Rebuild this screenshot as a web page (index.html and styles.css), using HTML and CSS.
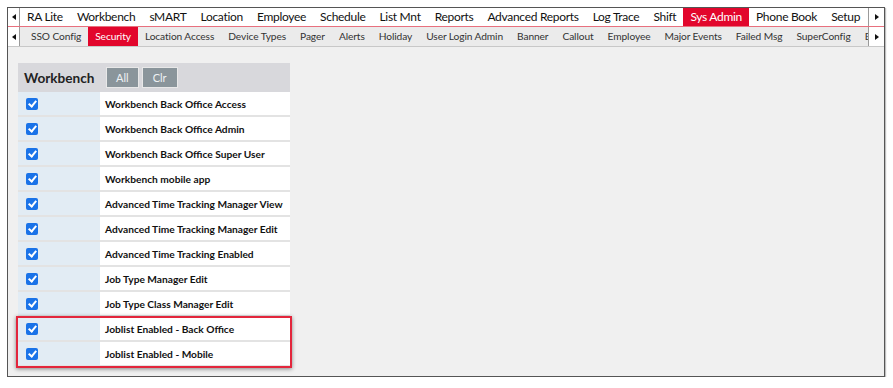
FILE: index.html
```html
<!DOCTYPE html>
<html>
<head>
<meta charset="utf-8">
<link rel="stylesheet" href="styles.css">
</head>
<body>
<div class="frame">
  <div class="nav nav1">
    <div class="arrow left"><span class="tri-l"></span></div>
    <div class="items">
      <span class="item">RA Lite</span>
      <span class="item">Workbench</span>
      <span class="item">sMART</span>
      <span class="item">Location</span>
      <span class="item">Employee</span>
      <span class="item">Schedule</span>
      <span class="item">List Mnt</span>
      <span class="item">Reports</span>
      <span class="item">Advanced Reports</span>
      <span class="item">Log Trace</span>
      <span class="item">Shift</span>
      <span class="item active">Sys Admin</span>
      <span class="item">Phone Book</span>
      <span class="item">Setup</span>
    </div>
    <div class="arrow right"><span class="tri-r"></span></div>
  </div>
  <div class="nav nav2">
    <div class="arrow left"><span class="tri-l"></span></div>
    <div class="items">
      <span class="item">SSO Config</span>
      <span class="item active">Security</span>
      <span class="item">Location Access</span>
      <span class="item">Device Types</span>
      <span class="item">Pager</span>
      <span class="item">Alerts</span>
      <span class="item">Holiday</span>
      <span class="item">User Login Admin</span>
      <span class="item">Banner</span>
      <span class="item">Callout</span>
      <span class="item">Employee</span>
      <span class="item">Major Events</span>
      <span class="item">Failed Msg</span>
      <span class="item">SuperConfig</span>
      <span class="item">Bi</span>
    </div>
    <div class="arrow right"><span class="tri-r"></span></div>
  </div>
  <div class="content">
    <div class="perm">
      <div class="perm-head">
        <div class="cell-a head-title">Workbench</div>
        <div class="cell-b head-btns"><button class="btn">All</button><button class="btn">Clr</button></div>
      </div>
      <div class="perm-row"><div class="cell-a"><span class="cb"></span></div><div class="cell-b">Workbench Back Office Access</div></div>
      <div class="perm-row"><div class="cell-a"><span class="cb"></span></div><div class="cell-b">Workbench Back Office Admin</div></div>
      <div class="perm-row"><div class="cell-a"><span class="cb"></span></div><div class="cell-b">Workbench Back Office Super User</div></div>
      <div class="perm-row"><div class="cell-a"><span class="cb"></span></div><div class="cell-b">Workbench mobile app</div></div>
      <div class="perm-row"><div class="cell-a"><span class="cb"></span></div><div class="cell-b">Advanced Time Tracking Manager View</div></div>
      <div class="perm-row"><div class="cell-a"><span class="cb"></span></div><div class="cell-b">Advanced Time Tracking Manager Edit</div></div>
      <div class="perm-row"><div class="cell-a"><span class="cb"></span></div><div class="cell-b">Advanced Time Tracking Enabled</div></div>
      <div class="perm-row"><div class="cell-a"><span class="cb"></span></div><div class="cell-b">Job Type Manager Edit</div></div>
      <div class="perm-row"><div class="cell-a"><span class="cb"></span></div><div class="cell-b">Job Type Class Manager Edit</div></div>
      <div class="perm-row"><div class="cell-a"><span class="cb"></span></div><div class="cell-b">Joblist Enabled - Back Office</div></div>
      <div class="perm-row"><div class="cell-a"><span class="cb"></span></div><div class="cell-b">Joblist Enabled - Mobile</div></div>
      <div class="highlight"></div>
    </div>
  </div>
</div>
</body>
</html>
```
FILE: styles.css
```css
* { box-sizing: border-box; }
body {
  margin: 0;
  background: #fff;
  font-family: Lato, "Open Sans", sans-serif;
  color: #111;
}
.frame {
  margin: 7px 0 0 7px;
  width: 878px;
  height: 370px;
  border: 1px solid #555;
  box-shadow: 1px 1px 1px rgba(0,0,0,0.25);
  background: #f0f0f0;
  display: flex;
  flex-direction: column;
  overflow: hidden;
}
.nav {
  display: flex;
  flex: none;
}
.nav1 {
  height: 19px;
  background: #fff;
  border-bottom: 1px solid #e8707e;
}
.nav2 {
  height: 20px;
  background: #ebebeb;
  border-bottom: 1px solid #c8c8c8;
}
.arrow {
  width: 12px;
  flex: none;
  display: flex;
  align-items: center;
  justify-content: center;
  background: #fff;
}
.arrow.left { border-right: 1px solid #9a9a9a; }
.arrow.right { width: 16px; border-left: 1px solid #9a9a9a; }
.tri-l {
  width: 0; height: 0;
  border-top: 3.5px solid transparent;
  border-bottom: 3.5px solid transparent;
  border-right: 4px solid #111;
}
.tri-r {
  width: 0; height: 0;
  border-top: 3.5px solid transparent;
  border-bottom: 3.5px solid transparent;
  border-left: 4px solid #111;
}
.items {
  flex: 1;
  display: flex;
  overflow: hidden;
  white-space: nowrap;
}
.item {
  flex: none;
  padding: 0 7px;
}
.nav1 .item {
  font-size: 12px;
  letter-spacing: -0.3px;
  line-height: 18px;
  color: #111;
}
.nav2 .items { padding-left: 4px; }
.nav2 .item {
  font-size: 10.2px;
  letter-spacing: -0.1px;
  line-height: 19px;
  color: #333;
}
.item.active {
  background: #e2062c;
  color: #fff !important;
}
.content {
  flex: 1;
  padding: 16px 10px 0;
}
.perm {
  position: relative;
  width: 272px;
}
.perm-head {
  display: flex;
  height: 29px;
  background: #d8d8dc;
}
.perm-row {
  display: flex;
  height: 25px;
  border-bottom: 2px solid #e3e3e3;
}
.cell-a {
  width: 82px;
  flex: none;
  display: flex;
  align-items: center;
  padding-left: 8px;
}
.perm-row .cell-a { background: #e2ecf4; }
.cell-b {
  flex: 1;
  display: flex;
  align-items: center;
  padding-left: 5px;
  font-size: 10.2px;
  font-weight: 700;
  color: #111;
  background: #fff;
}
.head-title {
  font-size: 13.6px;
  font-weight: 700;
  color: #222;
  padding-left: 6px;
}
.head-btns {
  background: transparent;
  padding-left: 6px;
  gap: 3px;
}
.btn {
  font-family: inherit;
  height: 21px;
  padding: 0 9px;
  background: #8a959b;
  color: #eef2f4;
  border: 1px solid #e8e8e8;
  font-size: 11px;
  font-weight: 400;
}
.btn + .btn { padding: 0 10px; }
.cb {
  width: 12px;
  height: 12px;
  border-radius: 2px;
  background: #1a73e8;
  position: relative;
}
.cb::after {
  content: "";
  position: absolute;
  left: 4px;
  top: 1.5px;
  width: 3px;
  height: 6px;
  border: solid #fff;
  border-width: 0 2px 2px 0;
  transform: rotate(40deg);
}
.highlight {
  position: absolute;
  left: -2px;
  right: -2px;
  bottom: -1px;
  height: 52px;
  border: 2px solid #e3263c;
  box-shadow: 0 1px 4px rgba(0,0,0,0.45);
  pointer-events: none;
}
```
